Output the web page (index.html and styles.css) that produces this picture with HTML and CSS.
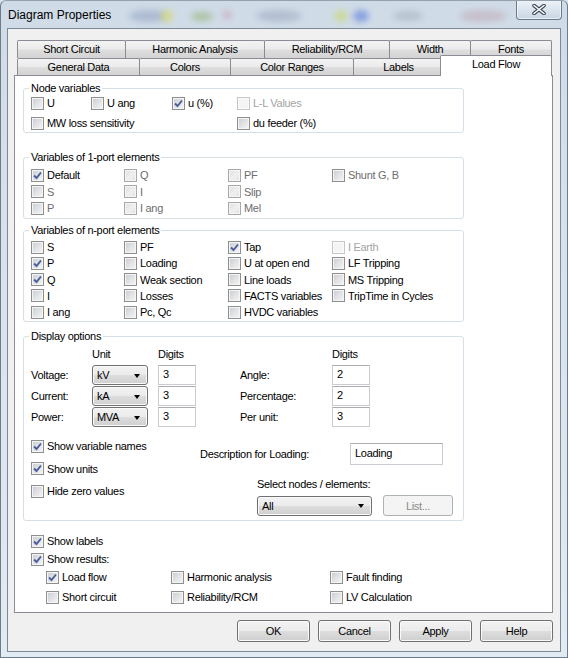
FILE: index.html
```html
<!DOCTYPE html>
<html>
<head>
<meta charset="utf-8">
<title>Diagram Properties</title>
<link rel="stylesheet" href="styles.css">
</head>
<body>
<div class="window">
  <div class="titlebar">
    <span class="title">Diagram Properties</span>
    <div class="glass">
      <span class="blob b1"></span><span class="blob b2"></span><span class="blob b3"></span>
      <span class="blob b4"></span><span class="blob b5"></span><span class="blob b6"></span>
      <span class="blob b7"></span><span class="blob b8"></span><span class="blob b9"></span>
    </div>
    <div class="close">
      <svg width="14" height="11" viewBox="0 0 14 11"><path d="M2 1.5 L12 9.5 M12 1.5 L2 9.5" stroke="#3b4656" stroke-width="3.6" stroke-linecap="round"/><path d="M2 1.5 L12 9.5 M12 1.5 L2 9.5" stroke="#ffffff" stroke-width="1.6" stroke-linecap="round"/></svg>
    </div>
  </div>

  <div class="client">
    <div class="tabctl">
      <div class="tabrow back">
        <div class="tab" style="width:109px">Short Circuit</div>
        <div class="tab" style="width:140px">Harmonic Analysis</div>
        <div class="tab" style="width:126px">Reliability/RCM</div>
        <div class="tab" style="width:82px">Width</div>
        <div class="tab" style="width:82px">Fonts</div>
      </div>
      <div class="tabrow front">
        <div class="tab" style="width:123px">General Data</div>
        <div class="tab" style="width:92px">Colors</div>
        <div class="tab" style="width:124px">Color Ranges</div>
        <div class="tab" style="width:91px">Labels</div>
        <div class="tab sel">Load Flow</div>
      </div>

      <div class="page">
        <fieldset class="grp node">
          <legend>Node variables</legend>
          <div class="g-node">
            <label class="cb"><span class="box"></span>U</label>
            <label class="cb"><span class="box"></span>U ang</label>
            <label class="cb"><span class="box on"><svg viewBox="0 0 11 11"><path d="M2 5.5 L4.5 8 L9 2.5" /></svg></span>u (%)</label>
            <label class="cb dis"><span class="box"></span>L-L Values</label>
            <label class="cb span3"><span class="box"></span>MW loss sensitivity</label>
            <label class="cb"><span class="box"></span>du feeder (%)</label>
          </div>
        </fieldset>

        <fieldset class="grp one">
          <legend>Variables of 1-port elements</legend>
          <div class="g-cols one-rows">
            <label class="cb"><span class="box on"><svg viewBox="0 0 11 11"><path d="M2 5.5 L4.5 8 L9 2.5" /></svg></span>Default</label>
            <label class="cb muted"><span class="box hatch"></span>Q</label>
            <label class="cb muted"><span class="box hatch"></span>PF</label>
            <label class="cb muted"><span class="box"></span>Shunt G, B</label>
            <label class="cb muted"><span class="box"></span>S</label>
            <label class="cb muted"><span class="box hatch"></span>I</label>
            <label class="cb muted"><span class="box hatch"></span>Slip</label>
            <span></span>
            <label class="cb muted"><span class="box"></span>P</label>
            <label class="cb muted"><span class="box hatch"></span>I ang</label>
            <label class="cb muted"><span class="box hatch"></span>Mel</label>
          </div>
        </fieldset>

        <fieldset class="grp npt">
          <legend>Variables of n-port elements</legend>
          <div class="g-cols n-rows">
            <label class="cb"><span class="box"></span>S</label>
            <label class="cb"><span class="box"></span>PF</label>
            <label class="cb"><span class="box on"><svg viewBox="0 0 11 11"><path d="M2 5.5 L4.5 8 L9 2.5" /></svg></span>Tap</label>
            <label class="cb dis"><span class="box"></span>I Earth</label>

            <label class="cb"><span class="box on"><svg viewBox="0 0 11 11"><path d="M2 5.5 L4.5 8 L9 2.5" /></svg></span>P</label>
            <label class="cb"><span class="box"></span>Loading</label>
            <label class="cb"><span class="box"></span>U at open end</label>
            <label class="cb"><span class="box"></span>LF Tripping</label>

            <label class="cb"><span class="box on"><svg viewBox="0 0 11 11"><path d="M2 5.5 L4.5 8 L9 2.5" /></svg></span>Q</label>
            <label class="cb"><span class="box"></span>Weak section</label>
            <label class="cb"><span class="box"></span>Line loads</label>
            <label class="cb"><span class="box"></span>MS Tripping</label>

            <label class="cb"><span class="box"></span>I</label>
            <label class="cb"><span class="box"></span>Losses</label>
            <label class="cb"><span class="box"></span>FACTS variables</label>
            <label class="cb"><span class="box"></span>TripTime in Cycles</label>

            <label class="cb"><span class="box"></span>I ang</label>
            <label class="cb"><span class="box"></span>Pc, Qc</label>
            <label class="cb"><span class="box"></span>HVDC variables</label>
          </div>
        </fieldset>

        <fieldset class="grp disp">
          <legend>Display options</legend>
          <div class="g-disp">
            <span></span><span class="hdr">Unit</span><span class="hdr">Digits</span><span></span><span class="hdr">Digits</span>

            <span class="lbl">Voltage:</span>
            <div class="combo unit"><span>kV</span><i class="arrow"></i></div>
            <div class="edit dig">3</div>
            <span class="lbl">Angle:</span>
            <div class="edit dig">2</div>

            <span class="lbl">Current:</span>
            <div class="combo unit"><span>kA</span><i class="arrow"></i></div>
            <div class="edit dig">3</div>
            <span class="lbl">Percentage:</span>
            <div class="edit dig">2</div>

            <span class="lbl">Power:</span>
            <div class="combo unit"><span>MVA</span><i class="arrow"></i></div>
            <div class="edit dig">3</div>
            <span class="lbl">Per unit:</span>
            <div class="edit dig">3</div>
          </div>

          <div class="lower">
            <div class="lower-left">
              <label class="cb"><span class="box on"><svg viewBox="0 0 11 11"><path d="M2 5.5 L4.5 8 L9 2.5" /></svg></span>Show variable names</label>
              <label class="cb"><span class="box on"><svg viewBox="0 0 11 11"><path d="M2 5.5 L4.5 8 L9 2.5" /></svg></span>Show units</label>
              <label class="cb"><span class="box"></span>Hide zero values</label>
            </div>
            <div class="lower-right">
              <div class="desc-row">
                <span class="desc-lbl">Description for Loading:</span>
                <div class="edit loading">Loading</div>
              </div>
              <div class="select-block">
                <span class="sel-lbl">Select nodes / elements:</span>
                <div class="sel-row">
                  <div class="combo all"><span>All</span><i class="arrow"></i></div>
                  <div class="btn list">List...</div>
                </div>
              </div>
            </div>
          </div>
        </fieldset>

        <div class="results">
          <label class="cb"><span class="box on"><svg viewBox="0 0 11 11"><path d="M2 5.5 L4.5 8 L9 2.5" /></svg></span>Show labels</label>
          <label class="cb"><span class="box on"><svg viewBox="0 0 11 11"><path d="M2 5.5 L4.5 8 L9 2.5" /></svg></span>Show results:</label>
          <div class="g-res">
            <label class="cb"><span class="box on"><svg viewBox="0 0 11 11"><path d="M2 5.5 L4.5 8 L9 2.5" /></svg></span>Load flow</label>
            <label class="cb"><span class="box"></span>Harmonic analysis</label>
            <label class="cb"><span class="box"></span>Fault finding</label>
            <label class="cb"><span class="box"></span>Short circuit</label>
            <label class="cb"><span class="box"></span>Reliability/RCM</label>
            <label class="cb"><span class="box"></span>LV Calculation</label>
          </div>
        </div>
      </div>
    </div>

    <div class="buttons">
      <div class="btn">OK</div>
      <div class="btn">Cancel</div>
      <div class="btn">Apply</div>
      <div class="btn">Help</div>
    </div>
  </div>
</div>
</body>
</html>
```

FILE: styles.css
```css
* { box-sizing: border-box; }
html, body { margin: 0; padding: 0; }
body {
  width: 568px;
  height: 658px;
  overflow: hidden;
  font-family: "Liberation Sans", Arial, sans-serif;
  font-size: 11px;
  letter-spacing: -0.3px;
  color: #000;
  background: #dbe5ef;
}

.window {
  width: 568px;
  height: 658px;
  border: 1px solid #6e7b88;
  border-top-color: #93a0ad;
  border-radius: 6px 6px 0 0;
  background: linear-gradient(180deg, #cfdbe7 0%, #d9e3ed 45%, #e2eaf2 100%);
  display: flex;
  flex-direction: column;
  overflow: hidden;
}

.titlebar {
  position: relative;
  height: 27px;
  flex: none;
  display: flex;
  align-items: center;
  padding-left: 7px;
  padding-top: 1px;
}
.title {
  position: relative;
  z-index: 2;
  font-size: 12px;
  letter-spacing: 0;
  color: #000;
}
.glass { position: absolute; inset: 0; z-index: 1; }
.blob {
  position: absolute;
  border-radius: 50%;
  filter: blur(3px);
  opacity: 0.55;
}
.b1 { left: 128px; top: 9px; width: 40px; height: 12px; background: #8fa0c0; }
.b2 { left: 160px; top: 9px; width: 12px; height: 12px; background: #e6e24a; }
.b3 { left: 190px; top: 11px; width: 22px; height: 9px; background: #8fb06a; }
.b4 { left: 222px; top: 10px; width: 8px; height: 8px; background: #c889a3; }
.b5 { left: 255px; top: 9px; width: 46px; height: 12px; background: #9aa7bd; }
.b6 { left: 333px; top: 9px; width: 14px; height: 12px; background: #c9d95a; }
.b7 { left: 352px; top: 9px; width: 16px; height: 12px; background: #4e70d8; }
.b8 { left: 392px; top: 10px; width: 30px; height: 10px; background: #a4adbc; }
.b9 { left: 458px; top: 9px; width: 48px; height: 12px; background: #c0a8b6; }

.close {
  position: absolute;
  z-index: 3;
  right: 5px;
  top: -1px;
  width: 46px;
  height: 20px;
  border: 1px solid #6b7b8f;
  border-top: none;
  border-radius: 0 0 4px 4px;
  background: linear-gradient(180deg, #eef3f8 0%, #dbe4ee 50%, #cad6e3 100%);
  box-shadow: inset 0 0 0 1px rgba(255,255,255,0.6);
  display: flex;
  align-items: center;
  justify-content: center;
}

.client {
  flex: 1;
  margin: 0 6px 5px 6px;
  border: 1px solid #7c8996;
  background: #f0f0f0;
  padding: 11px 7px 0 6px;
  display: flex;
  flex-direction: column;
}

.tabctl { width: 539px; }
.tabrow { display: flex; padding-left: 3px; }
.tabrow.back { height: 18px; }
.tabrow.front { height: 17px; }
.tab {
  height: 100%;
  flex: none;
  border: 1px solid #898c95;
  border-bottom: none;
  margin-right: -1px;
  border-radius: 2px 2px 0 0;
  background: linear-gradient(180deg, #f3f3f3 0%, #ebebeb 48%, #dedede 52%, #d3d3d3 100%);
  display: flex;
  align-items: center;
  justify-content: center;
  padding-bottom: 1px;
  white-space: nowrap;
}
.tab.sel {
  position: relative;
  z-index: 2;
  width: 112px;
  height: 21px;
  margin-top: -3px;
  margin-left: -3px;
  margin-bottom: -1px;
  background: #fff;
  align-items: flex-start;
  padding-top: 2px;
}

.page {
  position: relative;
  z-index: 1;
  height: 538px;
  border: 1px solid #898c95;
  background: #fff;
  padding: 6px 0 0 8px;
}

.grp {
  width: 441px;
  margin: 0;
  border: 1px solid #d5dfe5;
  border-radius: 3px;
  padding: 0 0 1px 7px;
  min-inline-size: 0;
}
.grp legend {
  padding: 0 2px;
  margin-left: -2px;
  height: 13px;
  line-height: 13px;
}

.cb {
  display: flex;
  align-items: center;
  height: 16px;
  white-space: nowrap;
}
.box {
  flex: none;
  width: 13px;
  height: 13px;
  margin-right: 3px;
  border: 1px solid #8e8f8f;
  background: linear-gradient(135deg, #c7cbd0 0%, #e0e2e5 50%, #f6f6f6 100%);
  box-shadow: inset 0 0 0 1px #f4f4f4;
  display: flex;
  align-items: center;
  justify-content: center;
}
.box svg { width: 11px; height: 11px; }
.box svg path {
  fill: none;
  stroke: #4b5e9b;
  stroke-width: 1.9;
}
.box.hatch {
  border-color: #a8a9aa;
  background: repeating-linear-gradient(135deg, #e2e2e2 0 1px, #f3f3f3 1px 2px);
}
.cb.muted { color: #6d6d6d; }
.cb.dis { color: #a3a3a3; }
.cb.dis .box {
  border-color: #c6c6c6;
  background: #f4f4f4;
  box-shadow: inset 0 0 0 1px #fbfbfb;
}

.node legend { }
.g-node {
  display: grid;
  grid-template-columns: 60px 81px 65px 1fr;
  grid-auto-rows: 16px;
  row-gap: 4px;
}
.span3 { grid-column: span 3; }

.one { margin-top: 18px; }
.one .g-cols { padding-top: 3px; }
.g-cols {
  display: grid;
  grid-template-columns: 93px 104px 104px 1fr;
}
.one-rows { grid-auto-rows: 16.5px; }
.npt { margin-top: 5px; }
.npt .g-cols { padding-top: 2.5px; }
.n-rows { grid-auto-rows: 16.25px; }

.disp { margin-top: 8px; padding-bottom: 4px; }
.g-disp {
  display: grid;
  grid-template-columns: 61px 66px 82px 92px 38px;
  grid-template-rows: 18.75px 21px 21px 21px;
  padding-top: 2.5px;
  align-items: center;
}
.hdr { align-self: start; line-height: 16px; }
.lbl { }
.edit {
  height: 20px;
  border: 1px solid #c9ccd2;
  border-top-color: #abadb3;
  background: #fff;
  padding-left: 4px;
  line-height: 17px;
}
.dig { width: 38px; }
.combo {
  height: 20px;
  border: 1px solid #707070;
  border-radius: 3px;
  background: linear-gradient(180deg, #f2f2f2 0%, #ebebeb 48%, #dddddd 52%, #cfcfcf 100%);
  box-shadow: inset 0 0 0 1px #fafafa;
  display: flex;
  align-items: center;
  justify-content: space-between;
  padding: 0 7px 0 4px;
}
.unit { width: 56px; }
.arrow {
  width: 0;
  height: 0;
  border-left: 3.5px solid transparent;
  border-right: 3.5px solid transparent;
  border-top: 4px solid #000;
  margin-top: 1px;
}

.lower {
  display: flex;
  margin-top: 10.5px;
}
.lower-left {
  width: 169px;
  display: flex;
  flex-direction: column;
  gap: 6.5px;
}
.lower-right { display: flex; flex-direction: column; }
.desc-row {
  display: flex;
  align-items: center;
  margin-top: 5px;
}
.desc-lbl { width: 150px; }
.loading { width: 93px; height: 22px; line-height: 19px; }
.select-block {
  margin-left: 57px;
  margin-top: 12.5px;
  display: flex;
  flex-direction: column;
}
.sel-lbl { line-height: 13px; }
.sel-row {
  display: flex;
  align-items: center;
  gap: 11px;
  margin-top: 4.5px;
}
.all { width: 115px; }

.btn {
  width: 73px;
  height: 22px;
  border: 1px solid #707070;
  border-radius: 3px;
  background: linear-gradient(180deg, #f2f2f2 0%, #ebebeb 48%, #dddddd 52%, #cfcfcf 100%);
  box-shadow: inset 0 0 0 1px #fbfbfb;
  display: flex;
  align-items: center;
  justify-content: center;
}
.btn.list {
  width: 70px;
  height: 21px;
  border-color: #adb2b5;
  background: #f4f4f4;
  box-shadow: none;
  color: #8a8a8a;
}

.results {
  margin-top: 12px;
  padding-left: 8px;
  display: flex;
  flex-direction: column;
  gap: 2px;
}
.g-res {
  display: grid;
  grid-template-columns: 125px 159px 1fr;
  grid-template-rows: 16px 16px;
  row-gap: 4px;
  margin-left: 15px;
}

.buttons {
  display: flex;
  justify-content: flex-end;
  gap: 8px;
  margin-top: 7px;
}
```
